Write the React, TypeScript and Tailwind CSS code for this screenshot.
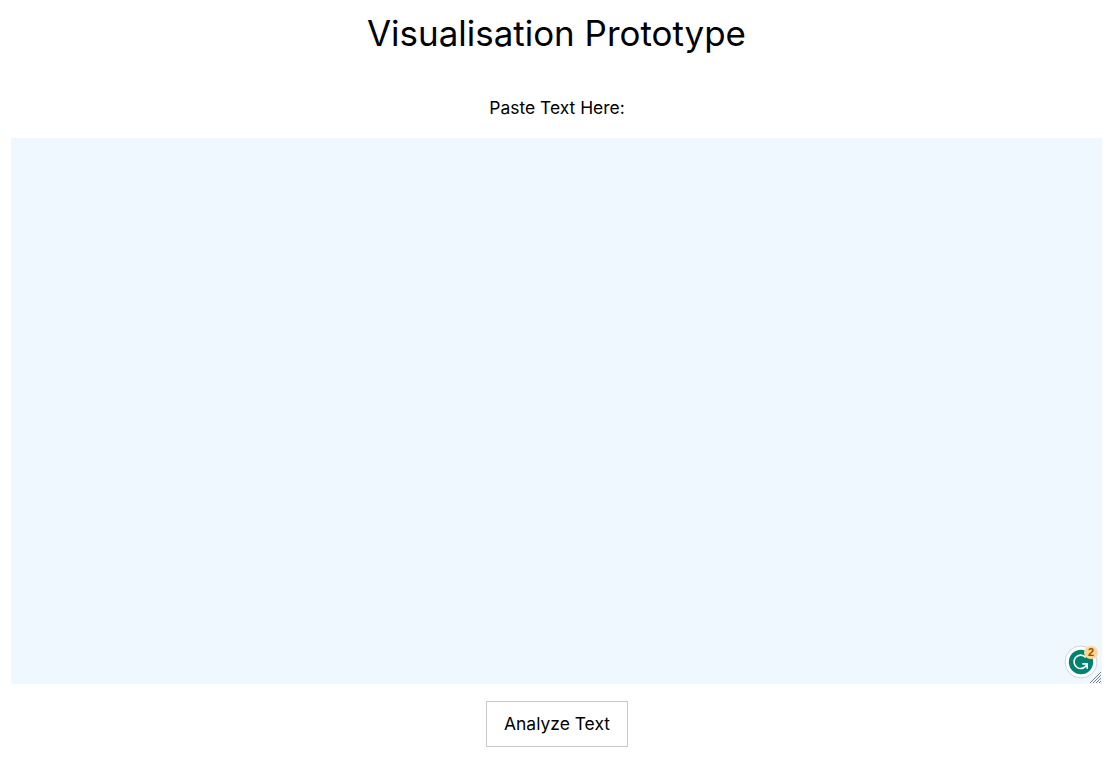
export default function App() {
  return (
    <main className="flex h-[759px] w-[1114px] flex-col items-center bg-white font-['Inter',sans-serif] text-black">
      <h1 className="mt-[9px] mr-px text-[34.95px] leading-[48px]">Visualisation Prototype</h1>
      <label htmlFor="source" className="mt-[39px] text-[17.45px] leading-[24px]">Paste Text Here:</label>
      <div className="relative mt-[18px] mr-px h-[546px] w-[1091px]">
        <textarea id="source" className="block h-full w-full resize-none bg-[#eff7ff] outline-none" />
        <svg className="absolute right-px bottom-px h-[11px] w-[11px]" viewBox="0 0 11 11" stroke="#777a7d" strokeWidth="0.95">
          <path d="M0 11L11 0M3 11l8-8M6 11l5-5M9 11l2-2" />
        </svg>
        <svg className="absolute right-[4px] bottom-[5px] h-[34px] w-[34px]" viewBox="0 0 34 34" fill="none">
          <circle cx="17" cy="17" r="16" fill="#fff" stroke="#d0d4e0" />
          <circle cx="17" cy="17" r="12.2" fill="#00826f" />
          <path d="M21.8 12.4A6.7 6.7 0 1 0 23 19.2M18.3 18.9h4.9v4.9" stroke="#fff" strokeWidth="1.6" />
        </svg>
        <span className="absolute top-[508px] right-[4px] flex h-[13px] w-[14px] items-center justify-center rounded-full bg-[#ffd796] font-['Liberation_Sans',sans-serif] text-[11px] leading-none font-bold text-[#8f5000]">2</span>
      </div>
      <button className="mt-[17px] h-[46px] w-[142px] border border-[#c8c8c8] pt-px text-[17.45px]">Analyze Text</button>
    </main>
  );
}
